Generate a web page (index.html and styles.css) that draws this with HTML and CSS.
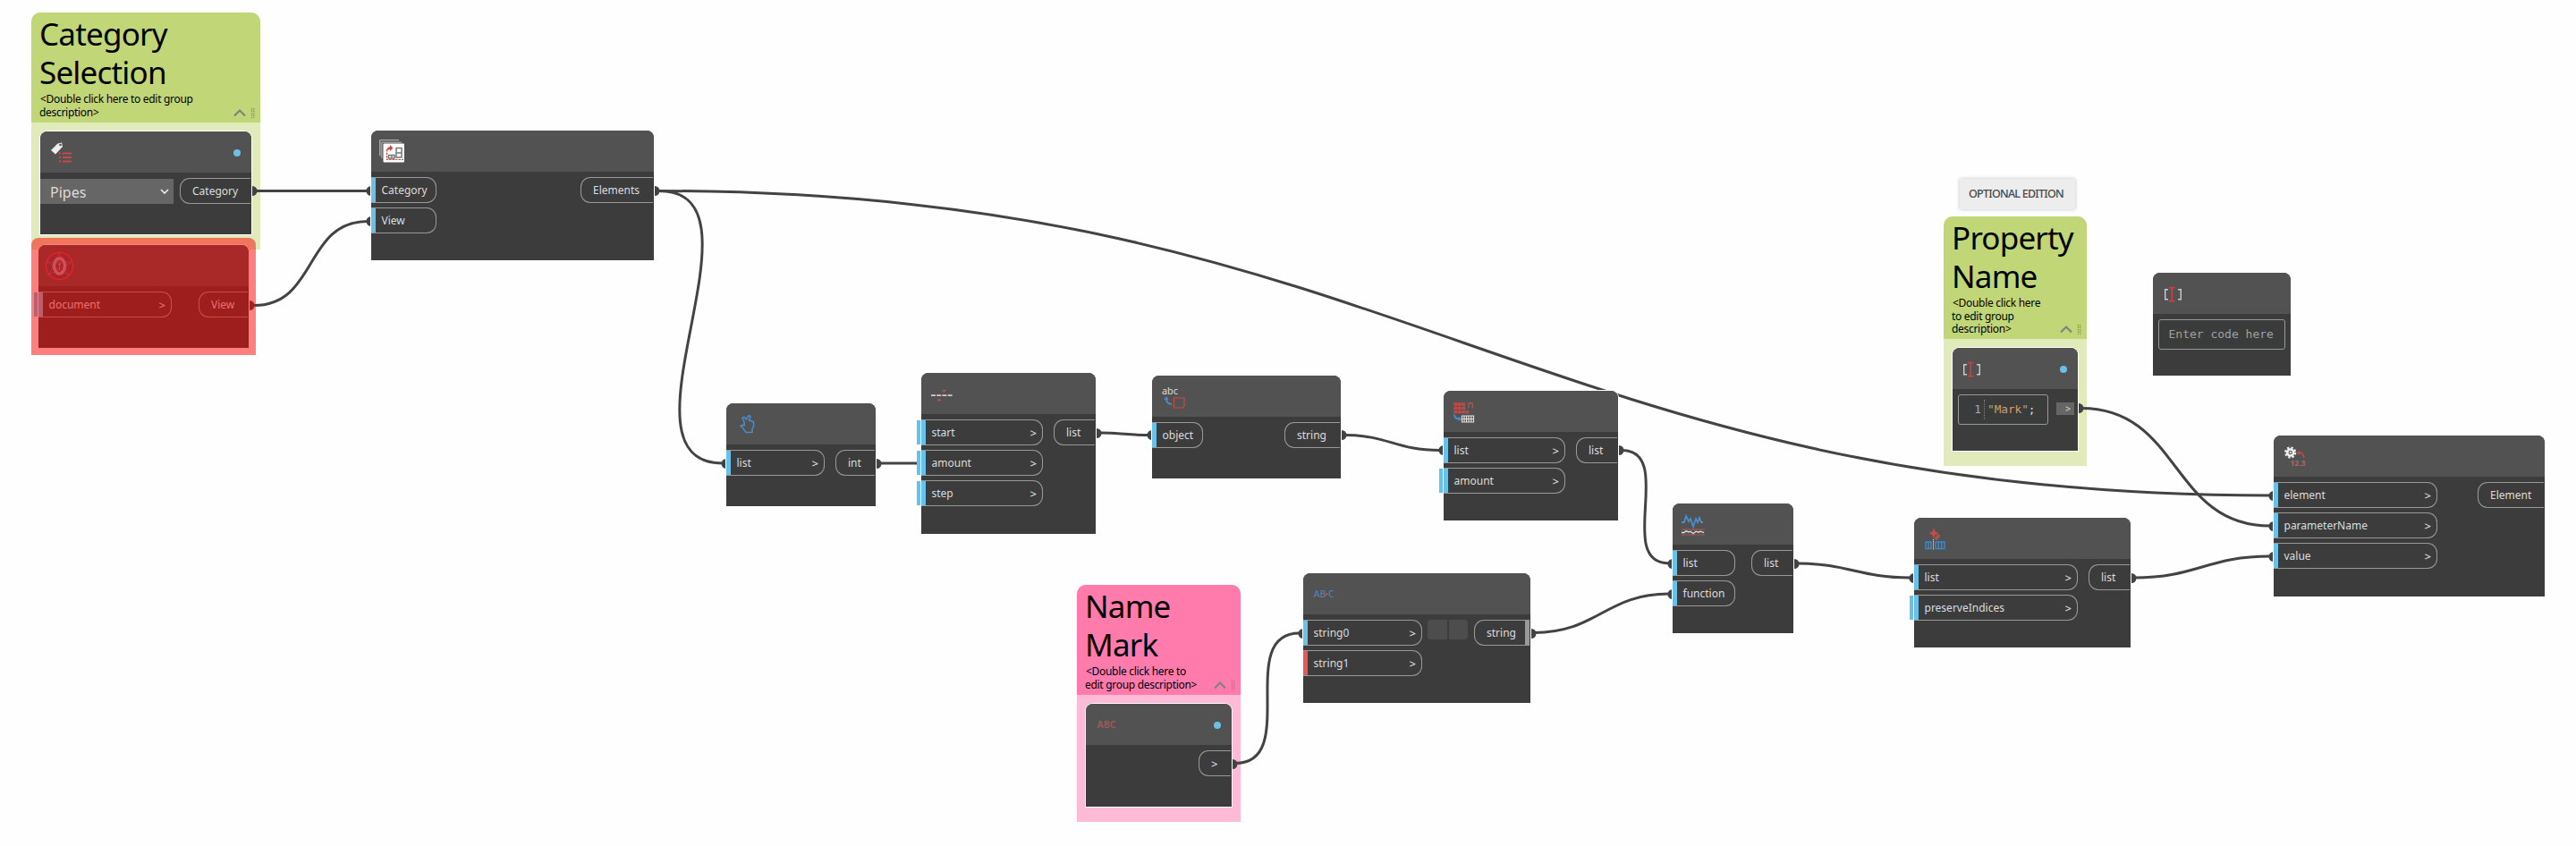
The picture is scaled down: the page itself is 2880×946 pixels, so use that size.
FILE: index.html
```html
<!DOCTYPE html>
<html lang="en">
<head>
<meta charset="utf-8">
<title>Graph workspace</title>
<link rel="stylesheet" href="styles.css">
</head>
<body>
<main class="canvas">

<section class="group green g-category">
  <header class="group-head">
    <h2>Category Selection</h2>
    <p>&lt;Double click here to edit group<br>description&gt;</p>
    <svg class="group-tools" viewBox="0 0 24 14"><path class="caret" d="M1 10.500 7 4.500 13 10.500"/><path class="grip" d="M20.500 2v11M22.800 2v11"/></svg>
  </header>
</section>

<section class="group pink g-mark">
  <header class="group-head">
    <h2>Name Mark</h2>
    <p>&lt;Double click here to<br>edit group description&gt;</p>
    <svg class="group-tools" viewBox="0 0 24 14"><path class="caret" d="M1 10.500 7 4.500 13 10.500"/><path class="grip" d="M20.500 2v11M22.800 2v11"/></svg>
  </header>
</section>

<div class="note">OPTIONAL EDITION</div>

<section class="group green g-property">
  <header class="group-head">
    <h2>Property Name</h2>
    <p>&lt;Double click here<br>to edit group<br>description&gt;</p>
    <svg class="group-tools" viewBox="0 0 24 14"><path class="caret" d="M1 10.500 7 4.500 13 10.500"/><path class="grip" d="M20.500 2v11M22.800 2v11"/></svg>
  </header>
</section>

<svg class="wires" viewBox="0 0 2880 946">
  <g class="wire">
    <path d="M285 213.500H411"/>
    <path d="M284 341.500C355 341.500 340 247.500 411 247.500"/>
    <path d="M737 213.500C1562 213.500 1713 554 2538 554"/>
    <path d="M737 213.500C867 213.500 678 518 808 518"/>
    <path d="M983 518H1027"/>
    <path d="M1229 484C1254 484 1260 486.500 1284 486.500"/>
    <path d="M1503 486.500C1552 486.500 1560 503.500 1610 503.500"/>
    <path d="M1813 503.500C1874 503.500 1805 630 1866 630"/>
    <path d="M1715 707.500C1786 707.500 1795 664 1866 664"/>
    <path d="M1381 853.500C1454 853.500 1380 708 1453 708"/>
    <path d="M2009 630C2067 630 2078 646 2136 646"/>
    <path d="M2386 646C2456 646 2468 622 2538 622"/>
    <path d="M2327 456.500C2438 456.500 2427 588 2538 588"/>
  </g>
  <g class="plug">
    <circle cx="282" cy="213.500" r="5.500"/><circle cx="279" cy="341.500" r="5.500"/>
    <circle cx="415" cy="213.500" r="5.500"/><circle cx="415" cy="247.500" r="5.500"/>
    <circle cx="732" cy="213.500" r="5.500"/><circle cx="812" cy="518.500" r="5.500"/>
    <circle cx="980" cy="518.500" r="5.500"/><circle cx="1226" cy="484.500" r="5.500"/>
    <circle cx="1288" cy="486.500" r="5.500"/><circle cx="1500" cy="486.500" r="5.500"/>
    <circle cx="1614" cy="503.500" r="5.500"/><circle cx="1810" cy="503.500" r="5.500"/>
    <circle cx="1870" cy="630.500" r="5.500"/><circle cx="1870" cy="664.500" r="5.500"/>
    <circle cx="1712" cy="708.500" r="5.500"/><circle cx="1457" cy="708.500" r="5.500"/>
    <circle cx="1378" cy="854.500" r="5.500"/><circle cx="2006" cy="630.500" r="5.500"/>
    <circle cx="2140" cy="646.500" r="5.500"/><circle cx="2383" cy="646.500" r="5.500"/>
    <circle cx="2542" cy="554.500" r="5.500"/><circle cx="2542" cy="588.500" r="5.500"/>
    <circle cx="2542" cy="622.500" r="5.500"/><circle cx="2324" cy="456.500" r="5.500"/>
  </g>
</svg>

<article class="node n-pipes">
  <header class="node-head">
    <svg class="icon" viewBox="0 0 32 32"><path fill="#eee" d="M4 13 11.500 5.500 16 4.500 17 9 9 17.500Z"/><circle cx="14.500" cy="7" r="1.300" fill="#525252"/><path stroke="#c64a48" stroke-width="2" d="M13 16.500h2m2 0h10M13 21h2m2 0h10M13 25.500h2m2 0h10"/></svg>
    <i class="dot"></i>
  </header>
  <div class="node-body">
    <div class="select">Pipes<svg viewBox="0 0 10 6"><path d="M1 1 5 5 9 1"/></svg></div>
    <div class="outs"><div class="out">Category</div></div>
  </div>
</article>

<article class="node n-document">
  <header class="node-head">
    <svg class="icon" viewBox="0 0 32 32"><circle cx="15.500" cy="15.500" r="15" fill="#4a4a68" fill-opacity=".6" stroke="#ff3a3a" stroke-width="1.200"/><path fill="none" stroke="#7a7a9a" stroke-width=".6" d="M15 1 4 25 29 11H2L26 26Z"/><ellipse cx="15.500" cy="15.500" rx="6" ry="8.500" fill="none" stroke="#b3999f" stroke-width="3.500"/><path stroke="#aaa" stroke-width=".7" d="M15.500 11v9M13 12l2.500 3 2.500-3"/></svg>
  </header>
  <div class="node-body">
    <div class="ins"><div class="in unset">document<b>&gt;</b></div></div>
    <div class="outs"><div class="out">View</div></div>
  </div>
</article>
<div class="error-cover"></div>

<article class="node n-elements">
  <header class="node-head">
    <svg class="icon" viewBox="0 0 32 32"><path fill="#aaa" d="M2 2h21v1.200H2.500v17H1V3Z"/><path fill="#999" d="M4 4.500h22v1.500H4.500V23H3V5.500Z"/><rect x="5.500" y="6.500" width="23.500" height="21" rx="1" fill="#fff"/><path fill="none" stroke="#c64a48" stroke-width="1.200" stroke-dasharray="2.500 1" d="M9.500 13v11.500H28"/><path fill="#c64a48" d="M9 15q0-4 4-5V8l3.500 3.500-3.500 3.500v-2q-2 0-4 2Z"/><path fill="none" stroke="#777" stroke-width="1.500" d="M20 11.500h6v10.500h-6ZM20 17h6M11.500 19.500h6.500v3.500h-6.500ZM15 19.500v3"/></svg>
  </header>
  <div class="node-body">
    <div class="ins"><div class="in">Category</div><div class="in">View</div></div>
    <div class="outs"><div class="out">Elements</div></div>
  </div>
</article>

<article class="node n-count">
  <header class="node-head">
    <svg class="icon" viewBox="0 0 32 32"><path fill="none" stroke="#4b8cca" stroke-width="1.500" stroke-linejoin="round" d="M14 24.500h7v-3.500l1.500-3v-5l-3-1.500-2 0 1.500-5-2-.8-2.500 4.500-2.500-3-2 1 2 5 .3 3.500-2-.5-2.500 1 2.500 2 2.500 4Z"/></svg>
  </header>
  <div class="node-body">
    <div class="ins"><div class="in">list<b>&gt;</b></div></div>
    <div class="outs"><div class="out">int</div></div>
  </div>
</article>

<article class="node n-sequence">
  <header class="node-head">
    <svg class="icon" viewBox="0 0 32 32"><path stroke="#ccc" stroke-width="1.800" stroke-dasharray="5 1.200" d="M3 17.200h23.600"/><path fill="#d04a48" d="M15 11h5l-2.500 3ZM9.500 23.200h5L12 20.200Z"/></svg>
  </header>
  <div class="node-body">
    <div class="ins"><div class="in unset">start<b>&gt;</b></div><div class="in unset">amount<b>&gt;</b></div><div class="in unset">step<b>&gt;</b></div></div>
    <div class="outs"><div class="out">list</div></div>
  </div>
</article>

<article class="node n-object">
  <header class="node-head">
    <svg class="icon" viewBox="0 0 32 32"><text class="glyph" x="3" y="13" font-size="10.500" fill="#ddd" textLength="18" lengthAdjust="spacingAndGlyphs">abc</text><path fill="none" stroke="#c64a48" stroke-width="1.200" d="M16.500 17h11.500v9l-2 2h-9.500Z"/><path fill="none" stroke="#4b8cca" stroke-width="1.800" d="M8 17.500q0 6 6 6.500"/><path fill="#4b8cca" d="M5.500 19 8 15l2.500 4Z"/></svg>
  </header>
  <div class="node-body">
    <div class="ins"><div class="in">object</div></div>
    <div class="outs"><div class="out">string</div></div>
  </div>
</article>

<article class="node n-cycle">
  <header class="node-head">
    <svg class="icon" viewBox="0 0 32 32"><path fill="none" stroke="#c64a48" stroke-width="1.400" d="M4 6h2.500v2H4ZM8.500 6H11v2H8.500ZM13 6h2.500v2H13ZM4 10.500h2.500v2H4ZM8.500 10.500H11v2H8.500ZM13 10.500h2.500v2H13ZM4 15h2.500v1.500H4ZM8.500 15H11v1.500H8.500ZM13 15h2.500v1.500H13ZM17.500 15h2v1.500h-2Z"/><path fill="none" stroke="#a85553" stroke-width="1.400" d="M20 11.500V5.800h4.200v5.700"/><path fill="none" stroke="#4b8cca" stroke-width="1.800" d="M4 18.500q0 5 6 5"/><path fill="#4b8cca" d="M8.500 21 12.500 23.500 8.500 26Z"/><path fill="none" stroke="#ddd" stroke-width="1.200" d="M12.500 20h13v7h-13ZM12.500 23.500h13M15 20v7M17.500 20v7M20 20v7M22.800 20v7"/></svg>
  </header>
  <div class="node-body">
    <div class="ins"><div class="in">list<b>&gt;</b></div><div class="in unset">amount<b>&gt;</b></div></div>
    <div class="outs"><div class="out">list</div></div>
  </div>
</article>

<article class="node n-string">
  <header class="node-head">
    <svg class="icon" viewBox="0 0 32 32"><text class="glyph" x="3.500" y="19" font-size="10.500" font-weight="500" fill="#5580a8" textLength="14" lengthAdjust="spacingAndGlyphs">AB</text><circle cx="18.200" cy="15.200" r="1.300" fill="#d04a48"/><text class="glyph" x="20" y="19" font-size="10.500" font-weight="500" fill="#5580a8">C</text></svg>
  </header>
  <div class="node-body">
    <div class="ins"><div class="in">string0<b>&gt;</b></div><div class="in missing">string1<b>&gt;</b></div></div>
    <div class="buttons"><i></i><i></i></div>
    <div class="outs"><div class="out function">string</div></div>
  </div>
</article>

<article class="node n-text">
  <header class="node-head">
    <svg class="icon" viewBox="0 0 32 32"><text class="glyph" x="4.500" y="19" font-size="10.500" font-weight="600" fill="#a35a59" textLength="21" lengthAdjust="spacingAndGlyphs">ABC</text></svg>
    <i class="dot"></i>
  </header>
  <div class="node-body">
    <div class="outs"><div class="out"><b>&gt;</b></div></div>
  </div>
</article>

<article class="node n-map">
  <header class="node-head">
    <svg class="icon" viewBox="0 0 32 32"><path fill="none" stroke="#4b8cca" stroke-width="1.800" d="M2 13h3l2-7 3 6 2-3 3 9 3-9 2 4 2-5 2 5h2"/><path stroke="#a85553" stroke-width="1.200" d="M2 21.200h26M2 27h26"/><path fill="none" stroke="#ddd" stroke-width="1.400" d="M2 24.500h3l2-1.700 3 1.200 2-.8 3 2.500 3-2.500 3 1 2-1 4 1.500"/></svg>
  </header>
  <div class="node-body">
    <div class="ins"><div class="in">list</div><div class="in">function</div></div>
    <div class="outs"><div class="out">list</div></div>
  </div>
</article>

<article class="node n-clean">
  <header class="node-head">
    <svg class="icon" viewBox="0 0 32 32"><path fill="#c64a48" d="M14 3.500 15.800 7.500 19.500 9.300 15.800 11 14 15 12.200 11 8.500 9.300 12.200 7.500Z"/><path fill="#a85553" d="M18.500 10 21.500 12 17.500 17.500 14.500 15Z"/><path fill="none" stroke="#3f86c6" stroke-width="1.500" d="M5 19h6v7.500H5ZM8 19v7.500M16 19h10v7.500H16ZM19.300 19v7.500M22.700 19v7.500"/><path stroke="#eee" stroke-dasharray="1.300 1" d="M13.500 16v12"/></svg>
  </header>
  <div class="node-body">
    <div class="ins"><div class="in">list<b>&gt;</b></div><div class="in unset">preserveIndices<b>&gt;</b></div></div>
    <div class="outs"><div class="out">list</div></div>
  </div>
</article>

<article class="node n-code">
  <header class="node-head">
    <svg class="icon code-icon" viewBox="0 0 32 32"><path fill="none" stroke="#ccc" stroke-width="1.400" d="M9 10.700H5.700v11H9M20 10.700h3.300v11H20"/><path fill="none" stroke="#c9403e" stroke-width="1.700" d="M10 8.700h6.500M13.200 8.700v15M10 23.700h6.500"/></svg>
    <i class="dot"></i>
  </header>
  <div class="node-body">
    <div class="editor"><span class="line-no">1</span><span class="literal">"Mark"</span>;</div>
    <div class="code-out">&gt;</div>
  </div>
</article>

<article class="node n-blank">
  <header class="node-head">
    <svg class="icon" viewBox="0 0 32 32"><path fill="none" stroke="#ccc" stroke-width="1.400" d="M9 10.700H5.700v11H9M20 10.700h3.300v11H20"/><path fill="none" stroke="#c9403e" stroke-width="1.700" d="M10 8.700h6.500M13.200 8.700v15M10 23.700h6.500"/></svg>
  </header>
  <div class="node-body">
    <div class="editor placeholder">Enter code here</div>
  </div>
</article>

<article class="node n-set">
  <header class="node-head">
    <svg class="icon" viewBox="0 0 32 32"><circle cx="10.700" cy="11" r="5.400" fill="none" stroke="#eee" stroke-width="2.400" stroke-dasharray="2.240 2"/><circle cx="10.700" cy="11" r="3.500" fill="none" stroke="#eee" stroke-width="2.600"/><circle cx="10.700" cy="11" r="1.200" fill="#ddd"/><path fill="none" stroke="#b85350" stroke-width="1.500" d="M26 17q-1-6-6-6"/><path fill="#c64a48" d="M17.500 11.300 21 9v4.500Z"/><text class="glyph" x="10.500" y="26" font-size="8.500" font-weight="700" fill="#b06563" textLength="17" lengthAdjust="spacingAndGlyphs">12.3</text></svg>
  </header>
  <div class="node-body">
    <div class="ins"><div class="in">element<b>&gt;</b></div><div class="in">parameterName<b>&gt;</b></div><div class="in">value<b>&gt;</b></div></div>
    <div class="outs"><div class="out">Element</div></div>
  </div>
</article>

</main>
</body>
</html>
```
FILE: styles.css
```css
* { box-sizing: border-box; }
body { margin: 0; background: #fff; font-family: "Noto Sans", "Open Sans", sans-serif; }
.canvas { position: relative; width: 2880px; height: 946px; overflow: hidden; background: #fefefe; }
.wires { position: absolute; left: 0; top: 0; width: 2880px; height: 946px; }
.wire { fill: none; stroke: #434343; stroke-width: 3; }
.plug { fill: #434343; }

/* groups */
.group { position: absolute; border-radius: 10px 10px 0 0; }
.green { background: #e1eabb; }
.pink { background: #ffbad5; }
.group-head { position: relative; padding: 2px 9px 0 9px; border-radius: 10px 10px 0 0; color: #000; }
.green .group-head { background: #c1d676; }
.pink .group-head { background: #ff7bac; }
.group h2 { margin: 0; font-size: 35px; line-height: 43px; font-weight: 400; letter-spacing: -.8px; width: min-content; }
.group p { margin: 2px 0 0 0; font-size: 12px; line-height: 14.700px; white-space: nowrap; text-indent: 1px; letter-spacing: -.3px; }
.group-tools { position: absolute; right: 6px; bottom: 4px; width: 24px; height: 14px; fill: none; }
.caret { stroke: #828282; stroke-width: 2.200; }
.grip { stroke: #858585; stroke-width: 1.200; stroke-dasharray: 1.500 1; }
.g-category { left: 35px; top: 14px; width: 256px; height: 265px; }
.g-mark { left: 1204px; top: 654px; width: 183px; height: 265px; }
.g-property { left: 2173px; top: 242px; width: 160px; height: 279px; }
.g-category .group-head, .g-mark .group-head { height: 123px; }
.g-property .group-head { height: 137px; }

.note { position: absolute; left: 2191px; top: 200px; width: 129px; height: 34px; padding-left: 10px; background: #ededed; box-shadow: 0 0 4px rgba(0,0,0,.25); font-size: 12.500px; line-height: 34px; font-weight: 500; color: #484848; letter-spacing: -.75px; white-space: nowrap; }

/* nodes */
.node { position: absolute; height: 115px; border-radius: 8px 8px 0 0; background: #3c3c3c; box-shadow: 0 0 0 1px #fff; color: #dcdcdc; font-size: 12px; }
.node-head { height: 46px; padding: 8px 12px 0 8px; border-radius: 8px 8px 0 0; background: #525252; display: flex; }
.icon { width: 32px; height: 32px; fill: none; }
.code-icon { margin-left: -1px; }
.glyph { font-family: "Noto Sans", sans-serif; }
.dot { margin: 12px 0 0 auto; width: 8px; height: 8px; border-radius: 50%; background: #6ac0e7; }
.node-body { display: flex; padding-top: 6px; }
.ins { display: flex; flex-direction: column; gap: 5px; }
.in, .out { height: 29px; border: 1px solid #999; line-height: 28px; display: flex; white-space: nowrap; }
.in { position: relative; border-left: 0; border-radius: 0 11px 11px 0; padding: 0 6px 0 0; }
.in::before { content: ""; width: 5px; height: 27px; margin-right: 6.500px; background: #6ac0e7; flex: none; }
.in.missing::before { background: #eb5555; }
.in.unset::after { content: ""; position: absolute; left: -5px; top: 0; width: 4px; height: 27px; background: #6ac0e7; }
.in b { margin-left: auto; }
b { font-weight: 500; font-size: 13px; }
.outs { margin: 0 1px 0 auto; }
.out { border-right: 0; border-radius: 11px 0 0 11px; padding-left: 13px; }
.out.function::after { content: ""; width: 5px; height: 27px; margin-left: auto; background: #999; }

.select { width: 149px; height: 28px; margin-top: 1px; padding: 2px 5px 0 11px; display: flex; align-items: center; justify-content: space-between; background: #666; font-size: 16px; line-height: 28px; }
.select svg { width: 10px; height: 6px; margin-top: -2px; fill: none; stroke: #eee; stroke-width: 1.600; }
.buttons { display: flex; gap: 2px; margin-left: 6px; }
.buttons i { width: 21.500px; height: 22px; background: #4d4d4d; }
.buttons i:first-child { border-radius: 4px 0 0 4px; }
.buttons i:last-child { border-radius: 0 4px 4px 0; }
.editor { margin-left: 6px; height: 34px; border: 1px solid #999; border-radius: 3px; background: #3a3c3b; font: 12.700px/31px "DejaVu Sans Mono", monospace; color: #dcdcdc; white-space: nowrap; }
.placeholder { width: 142px; padding-left: 10.500px; color: #a0a0a0; font-size: 13px; line-height: 32px; }
.line-no { display: inline-block; width: 29px; height: 22px; margin: 5px 3px 0 0; padding-right: 3px; border-right: 1px dotted #888; text-align: right; line-height: 21px; color: #aaa; vertical-align: top; }
.literal { color: #d69d64; }
.code-out { margin: 9px 0 0 9px; width: 20px; height: 14px; background: #666; font-size: 11px; line-height: 13px; padding-left: 10px; }

.n-pipes { left: 45px; top: 147px; width: 236px; }
.n-pipes .out { width: 79px; }
.n-document { left: 43px; top: 274px; width: 235px; }
.n-document .in { width: 149px; }
.n-document .out { width: 55px; }
.error-cover { position: absolute; left: 35px; top: 266px; width: 251px; height: 131px; border-radius: 8px 8px 0 0; background: rgba(255,0,0,.5); }
.n-elements { left: 415px; top: 146px; width: 316px; height: 145px; }
.n-elements .in { width: 73px; }
.n-elements .out { width: 81px; }
.n-count { left: 812px; top: 451px; width: 167px; }
.n-count .in { width: 110px; }
.n-count .out { width: 44px; }
.n-sequence { left: 1030px; top: 417px; width: 195px; height: 180px; }
.n-sequence .in { width: 136px; }
.n-sequence .out { width: 46px; }
.n-object { left: 1288px; top: 420px; width: 211px; }
.n-object .in { width: 57px; }
.n-object .out { width: 62px; }
.n-cycle { left: 1614px; top: 437px; width: 195px; height: 145px; }
.n-cycle .in { width: 136px; }
.n-cycle .out { width: 46px; }
.n-string { left: 1457px; top: 641px; width: 254px; height: 145px; }
.n-string .in { width: 133px; }
.n-string .out { width: 62px; }
.n-text { left: 1214px; top: 787px; width: 163px; }
.n-text .out { width: 36px; }
.n-map { left: 1870px; top: 563px; width: 135px; height: 145px; }
.n-map .in { width: 70px; }
.n-map .out { width: 46px; }
.n-clean { left: 2140px; top: 579px; width: 242px; height: 145px; }
.n-clean .in { width: 183px; }
.n-clean .out { width: 46px; }
.n-code { left: 2183px; top: 389px; width: 140px; }
.n-code .editor { width: 101px; }
.n-blank { left: 2407px; top: 305px; width: 154px; }
.n-set { left: 2542px; top: 487px; width: 303px; height: 180px; }
.n-set .in { width: 183px; }
.n-set .out { width: 74px; }
```
